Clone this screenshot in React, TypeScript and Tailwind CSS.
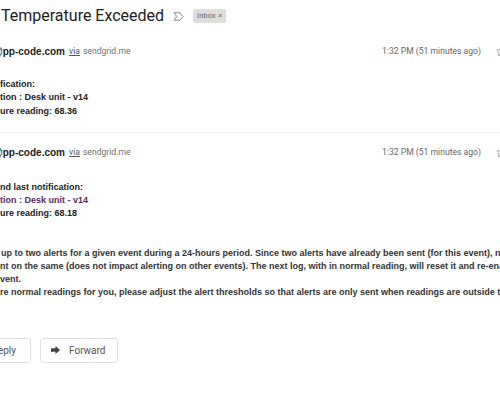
import { Star } from "lucide-react";

const ImportantMark = () => (
  <svg width="11" height="9" viewBox="0 0 11 9" className="shrink-0">
    <path d="M1 0.8 H7 L10 4.5 L7 8.2 H1 L3.8 4.5 Z" fill="none" stroke="#8a8a8a" strokeWidth="1" strokeLinejoin="round" />
  </svg>
);

const ForwardIcon = () => (
  <svg width="9" height="8" viewBox="0 0 9 8">
    <path d="M0 2.2 H4.5 V0 L9 4 L4.5 8 V5.8 H0 Z" fill="#444" />
  </svg>
);

const Header = () => (
  <div className="flex h-3 items-center whitespace-nowrap">
    <span className="-ml-[7px] font-['Liberation_Sans',sans-serif] text-[10px] font-bold text-[#222]">@pp-code.com</span>
    <span className="ml-[4px] font-['Roboto',sans-serif] text-[8.6px] text-[#555] underline">via</span>
    <span className="ml-[3px] font-['Roboto',sans-serif] text-[8.6px] text-[#6f6f6f]">sendgrid.me</span>
    <span className="ml-auto font-['Roboto',sans-serif] text-[8.6px] text-[#666]">1:32 PM (51 minutes ago)</span>
    <Star className="-mr-[7px] ml-[15px] h-[11px] w-[11px] text-[#999]" strokeWidth={2} />
  </div>
);

export default function App() {
  return (
    <div className="h-[400px] w-[500px] overflow-hidden bg-white">
      <div className="flex h-8 items-center whitespace-nowrap pl-[1px]">
        <h1 className="font-['Roboto',sans-serif] text-[16px] font-normal text-[#222]">Temperature Exceeded</h1>
        <span className="ml-[9px]">
          <ImportantMark />
        </span>
        <span className="ml-[9px] rounded-[2px] bg-[#dddddd] px-[4px] py-[1px] font-['Roboto',sans-serif] text-[7.5px] text-[#666]">
          Inbox <span className="ml-[1px]">×</span>
        </span>
      </div>

      <div className="mt-[13px]">
        <Header />
      </div>
      <div className="mt-[21px] font-['Liberation_Sans',sans-serif] text-[9px] font-bold leading-[13.3px] text-[#222] whitespace-nowrap">
        <div>fication:</div>
        <div>tion : Desk unit - v14</div>
        <div>ure reading: 68.36</div>
      </div>

      <div className="mt-[14px] h-px bg-[#efefef]" />

      <div className="mt-[14px]">
        <Header />
      </div>
      <div className="mt-[22px] font-['Liberation_Sans',sans-serif] text-[9px] font-bold leading-[13.2px] whitespace-nowrap">
        <div className="text-[#222]">nd last notification:</div>
        <div className="text-[#5c2a63]">tion : Desk unit - v14</div>
        <div className="text-[#222]">ure reading: 68.18</div>
      </div>

      <div className="mt-[26px] font-['Liberation_Sans',sans-serif] text-[9px] font-bold leading-[13px] text-[#333] whitespace-nowrap">
        <div className="pl-[1px]">up to two alerts for a given event during a 24-hours period. Since two alerts have already been sent (for this event), no more alerts will be se</div>
        <div>nt on the same (does not impact alerting on other events). The next log, with in normal reading, will reset it and re-enable alerts for this</div>
        <div>vent.</div>
        <div>re normal readings for you, please adjust the alert thresholds so that alerts are only sent when readings are outside the normal range.</div>
      </div>

      <div className="mt-[39px] flex items-center gap-[9px] font-['Roboto',sans-serif] text-[10px] text-[#555]">
        <div className="-ml-[40px] flex h-[25px] w-[71px] items-center justify-end rounded-[3px] border border-[#e2e2e2] pr-[14px]">
          Reply
        </div>
        <div className="flex h-[25px] w-[78px] items-center rounded-[3px] border border-[#e2e2e2] pl-[10px]">
          <ForwardIcon />
          <span className="ml-[9px]">Forward</span>
        </div>
      </div>
    </div>
  );
}
